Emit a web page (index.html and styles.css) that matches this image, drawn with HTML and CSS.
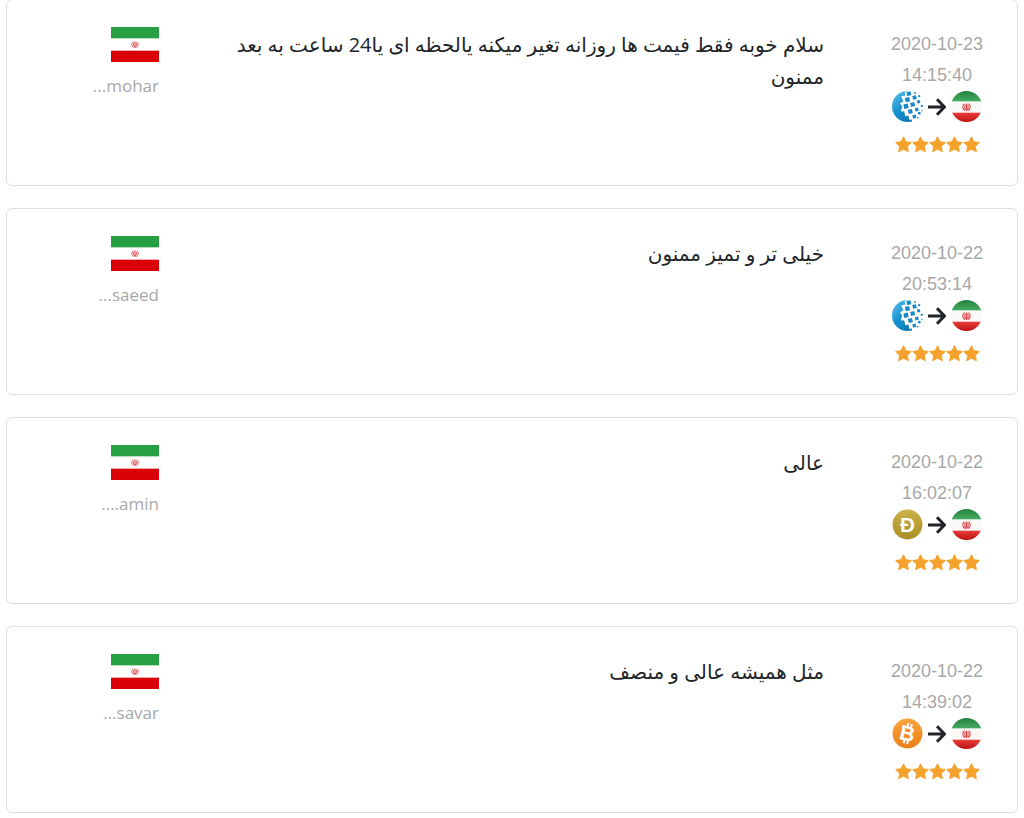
FILE: index.html
```
<!DOCTYPE html>
<html lang="fa" dir="rtl">
<head>
  <meta charset="utf-8">
  <meta name="viewport" content="width=device-width, initial-scale=1">
  <title>نظرات کاربران</title>
  <link rel="stylesheet" href="styles.css">
</head>
<body>
  <!-- Shared icons -->
  <svg class="icon-defs" width="0" height="0" aria-hidden="true">
    <defs>
      <linearGradient id="webmoneyFill" x1="0" y1="0" x2="1" y2="1">
        <stop offset="0" stop-color="#6cc6ec"/>
        <stop offset="0.4" stop-color="#1593cf"/>
        <stop offset="1" stop-color="#0a68a4"/>
      </linearGradient>
      <linearGradient id="dogeFill" x1="0" y1="0" x2="0" y2="1">
        <stop offset="0" stop-color="#cbb24a"/>
        <stop offset="1" stop-color="#a98c24"/>
      </linearGradient>
      <linearGradient id="bitcoinFill" x1="0" y1="0" x2="0" y2="1">
        <stop offset="0" stop-color="#f9a43c"/>
        <stop offset="1" stop-color="#ea7d17"/>
      </linearGradient>
      <linearGradient id="greenFill" x1="0" y1="0" x2="0" y2="1">
        <stop offset="0" stop-color="#25803f"/>
        <stop offset="1" stop-color="#45ab62"/>
      </linearGradient>
      <linearGradient id="redFill" x1="0" y1="0" x2="0" y2="1">
        <stop offset="0" stop-color="#ea3b3b"/>
        <stop offset="1" stop-color="#bd1414"/>
      </linearGradient>
      <clipPath id="roundClip"><circle cx="15" cy="15" r="15"/></clipPath>
    </defs>

    <symbol id="emblem" viewBox="0 0 10 10">
      <g fill="none" stroke="#dc4a4d" stroke-width="1.2">
        <path d="M5 1.200V9.500"/>
        <path d="M2.800 1.500C.2 3.600.4 7.200 3.600 8.800M7.200 1.500c2.600 2.100 2.400 5.700-.8 7.300"/>
        <path d="M3.900 2.500C2.600 4.500 2.800 6.800 5 8.200 7.200 6.800 7.400 4.500 6.100 2.500"/>
      </g>
    </symbol>

    <symbol id="flag" viewBox="0 0 48 35">
      <rect width="48" height="35" fill="#fff"/>
      <rect width="48" height="11" fill="#26a043"/>
      <rect y="24" width="48" height="11" fill="#d90008"/>
      <path d="M0 11.500h48" stroke="#b3ddbc"/>
      <path d="M0 23.500h48" stroke="#f3aaac"/>
      <use href="#emblem" x="20" y="13" width="8" height="9"/>
    </symbol>

    <symbol id="iran" viewBox="0 0 30 30">
      <g clip-path="url(#roundClip)">
        <rect width="30" height="30" fill="#fbf8f8"/>
        <rect width="30" height="10" fill="url(#greenFill)"/>
        <rect y="21" width="30" height="9" fill="url(#redFill)"/>
      </g>
      <use href="#emblem" x="10" y="11" width="10" height="9"/>
    </symbol>

    <symbol id="webmoney" viewBox="0 0 30 30">
      <circle cx="15" cy="15" r="15" fill="url(#webmoneyFill)"/>
      <path d="M18.500 0H31V30H19.500L19.300 27.500 16.800 28 15.800 23.800 12.800 24.400 11.800 19.500 8.600 19.800 9.800 14.800 7.600 11.800 11 10.200 9 5.200 13 4.300 12.200.8Z" fill="#fff"/>
      <g fill="#1689c6">
        <path d="m14 1.200 4-.7.700 3.500-4 .9zM12.400 6.700l4.200-.9.900 4.100-4.200.9zM19.600 4.800l3.600-.7.800 3.600-3.600.8zM11 13.100l4.200-.9.900 4.200-4.200.9zM17.600 11.500l3.900-.9.900 3.900-3.900.9zM24 9.200l2.800-.6.700 2.900-2.900.6zM15.300 18.300l4-.9.900 4-4 .9zM22 16.600l3.200-.7.700 3.200-3.100.8zM19.700 23.500l3.200-.7.700 3.200-3.200.8z"/>
        <circle cx="22.300" cy="1.900" r=".9"/>
        <circle cx="26.300" cy="5" r="1.100"/>
        <circle cx="28.800" cy="14.500" r="1.100"/>
        <circle cx="26.400" cy="21.500" r="1.300"/>
        <circle cx="29" cy="19" r=".7"/>
        <circle cx="25" cy="26" r=".8"/>
      </g>
    </symbol>

    <symbol id="arrow" viewBox="0 0 18 18">
      <path d="M0 9h16M9 1.200 16.500 9 9 16.800" fill="none" stroke="#212529" stroke-width="3" stroke-linejoin="round"/>
    </symbol>

    <symbol id="star" viewBox="0 0 17 17">
      <path d="M8.500.8l2.400 4.900 5.400.8-3.900 3.800.9 5.400-4.800-2.500-4.800 2.500.9-5.400L.7 6.500l5.400-.8z" fill="#f5a22c" stroke="#f5a22c" stroke-width="1" stroke-linejoin="round"/>
    </symbol>
  </svg>

  <main class="reviews">
    <article class="review">
      <div class="meta">
        <time datetime="2020-10-23T14:15:40"><span>2020-10-23</span> <span>14:15:40</span></time>
        <div class="exchange">
          <svg class="coin"><use href="#iran"/></svg>
          <svg class="arrow"><use href="#arrow"/></svg>
          <svg class="coin"><use href="#webmoney"/></svg>
        </div>
        <div class="stars" role="img" aria-label="5 / 5">
          <svg><use href="#star"/></svg><svg><use href="#star"/></svg><svg><use href="#star"/></svg><svg><use href="#star"/></svg><svg><use href="#star"/></svg>
        </div>
      </div>
      <p class="comment">سلام خوبه فقط فیمت ها روزانه تغیر میکنه یالحظه ای یا24 ساعت به بعد ممنون</p>
      <div class="user">
        <svg class="flag"><use href="#flag"/></svg>
        <span>mohar...</span>
      </div>
    </article>

    <article class="review">
      <div class="meta">
        <time datetime="2020-10-22T20:53:14"><span>2020-10-22</span> <span>20:53:14</span></time>
        <div class="exchange">
          <svg class="coin"><use href="#iran"/></svg>
          <svg class="arrow"><use href="#arrow"/></svg>
          <svg class="coin"><use href="#webmoney"/></svg>
        </div>
        <div class="stars" role="img" aria-label="5 / 5">
          <svg><use href="#star"/></svg><svg><use href="#star"/></svg><svg><use href="#star"/></svg><svg><use href="#star"/></svg><svg><use href="#star"/></svg>
        </div>
      </div>
      <p class="comment">خیلی تر و تمیز ممنون</p>
      <div class="user">
        <svg class="flag"><use href="#flag"/></svg>
        <span>saeed...</span>
      </div>
    </article>

    <article class="review">
      <div class="meta">
        <time datetime="2020-10-22T16:02:07"><span>2020-10-22</span> <span>16:02:07</span></time>
        <div class="exchange">
          <svg class="coin"><use href="#iran"/></svg>
          <svg class="arrow"><use href="#arrow"/></svg>
          <svg class="coin" viewBox="0 0 30 30">
            <circle cx="15" cy="15" r="14.500" fill="url(#dogeFill)"/>
            <text class="coin-letter" x="15" y="22">Ð</text>
          </svg>
        </div>
        <div class="stars" role="img" aria-label="5 / 5">
          <svg><use href="#star"/></svg><svg><use href="#star"/></svg><svg><use href="#star"/></svg><svg><use href="#star"/></svg><svg><use href="#star"/></svg>
        </div>
      </div>
      <p class="comment">عالی</p>
      <div class="user">
        <svg class="flag"><use href="#flag"/></svg>
        <span>amin....</span>
      </div>
    </article>

    <article class="review">
      <div class="meta">
        <time datetime="2020-10-22T14:39:02"><span>2020-10-22</span> <span>14:39:02</span></time>
        <div class="exchange">
          <svg class="coin"><use href="#iran"/></svg>
          <svg class="arrow"><use href="#arrow"/></svg>
          <svg class="coin" viewBox="0 0 30 30">
            <circle cx="15" cy="15" r="14.500" fill="url(#bitcoinFill)"/>
            <g transform="rotate(13 15 15)">
              <path d="M13.500 5v4M17 5v4M13.500 21v4M17 21v4M8.500 9.200h4M8.500 20.800h4" stroke="#fff" stroke-width="2"/>
              <text class="coin-letter" x="15" y="22">B</text>
            </g>
          </svg>
        </div>
        <div class="stars" role="img" aria-label="5 / 5">
          <svg><use href="#star"/></svg><svg><use href="#star"/></svg><svg><use href="#star"/></svg><svg><use href="#star"/></svg><svg><use href="#star"/></svg>
        </div>
      </div>
      <p class="comment">مثل همیشه عالی و منصف</p>
      <div class="user">
        <svg class="flag"><use href="#flag"/></svg>
        <span>savar...</span>
      </div>
    </article>
  </main>
</body>
</html>
```
FILE: styles.css
```
* {
  box-sizing: border-box;
}
body {
  margin: 0;
  background-color: #fff;
  color: #212529;
  font-family: "Open Sans", "DejaVu Sans", sans-serif;
}
svg {
  display: block;
}
.icon-defs {
  position: absolute;
}
.coin-letter {
  font-family: "Liberation Sans", sans-serif;
  font-size: 20px;
  font-weight: bold;
  fill: #fff;
  text-anchor: middle;
}

/* Review cards */
.reviews {
  display: flex;
  flex-direction: column;
  gap: 22px;
  margin-top: -1px;
  padding: 0 6px 5px;
}
.review {
  display: grid;
  grid-template-columns: 160px 1fr 152px;
  column-gap: 33px;
  min-height: 187px;
  padding: 27px 0;
  border: 1px solid #dfdfdf;
  border-radius: 6px;
}
.comment {
  margin: 0;
  padding-top: 2px;
  font-size: 20px;
  line-height: 32px;
}

/* Date, direction of the exchange and rating */
.meta {
  display: flex;
  flex-direction: column;
  align-items: center;
  padding-top: 2px;
}
.meta time {
  direction: ltr;
  color: #a8a8a8;
  font-family: "Liberation Sans", sans-serif;
  font-size: 18px;
  line-height: 31px;
  text-align: center;
}
.meta time span {
  display: block;
}
.exchange {
  display: flex;
  align-items: center;
  gap: 5px;
  margin-bottom: 14px;
}
.coin {
  width: 31px;
  height: 31px;
}
.arrow {
  width: 18px;
  height: 18px;
}
.stars {
  display: flex;
}
.stars svg {
  width: 17px;
  height: 17px;
}

/* Country and user name */
.user {
  color: #a8a8a8;
  font-size: 17px;
  line-height: 24px;
}
.flag {
  width: 48px;
  height: 35px;
  margin-bottom: 12px;
}
```
